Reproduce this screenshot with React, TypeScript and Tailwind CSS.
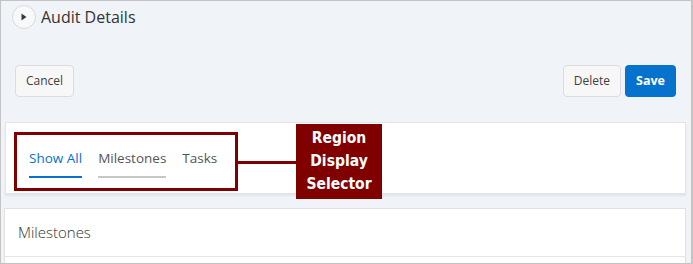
const font = { fontFamily: '"Open Sans", "Noto Sans", sans-serif' };

const PlayButton = () => (
  <button className="w-6 h-6 rounded-full border border-[#d9d9d9] bg-[#f8f9fa] flex items-center justify-center">
    <svg width="6" height="8" viewBox="0 0 6 8">
      <path d="M0.5 0.5 L5.5 4 L0.5 7.5 Z" fill="#3a3a3a" />
    </svg>
  </button>
);

const Tab = ({ label, active, seen }: { label: string; active?: boolean; seen?: boolean }) => (
  <div
    className={
      active
        ? "text-[13.5px] leading-4 pb-[10px] border-b-2 border-[#0572ce] text-[#0572ce]"
        : seen
        ? "text-[13.5px] leading-4 pb-[10px] border-b-2 border-[#c8c8c8] text-[#555]"
        : "text-[13.5px] leading-4 pb-[10px] border-b-2 border-transparent text-[#555]"
    }
  >
    {label}
  </div>
);

export default function App() {
  return (
    <div
      className="relative w-[693px] h-[264px] overflow-hidden bg-[#f0f4f9] border-t border-l border-b border-r-2 border-[#c4c4c4]"
      style={font}
    >
      {/* Title row */}
      <div className="flex items-center gap-[5px] pt-[4px] pl-[11px]">
        <PlayButton />
        <span className="text-[16px] leading-6 text-[#333]">Audit Details</span>
      </div>

      {/* Buttons */}
      <div className="flex items-center justify-between mt-[36px] pl-[14px] pr-[15px]">
        <button className="h-8 px-[10px] rounded-sm border border-[#dcdcdc] bg-[#f7f7f7] text-[12px] text-[#404040]">
          Cancel
        </button>
        <div className="flex gap-1">
          <button className="h-8 px-[10px] rounded-sm border border-[#dcdcdc] bg-[#f7f7f7] text-[12px] text-[#404040]">
            Delete
          </button>
          <button className="h-8 px-[11px] rounded-sm bg-[#0572ce] text-[12.5px] font-bold text-white">
            Save
          </button>
        </div>
      </div>

      {/* Region display selector */}
      <div className="mt-[25px] ml-[4px] mr-[5px] h-[72px] bg-white border border-[#e3e3e3] shadow-[0_2px_2px_rgba(0,0,0,0.06)] pl-[23px] pt-[27px]">
        <div className="flex gap-4">
          <Tab label="Show All" active />
          <Tab label="Milestones" seen />
          <Tab label="Tasks" />
        </div>
      </div>

      {/* Milestones region */}
      <div className="mt-[14px] ml-[3px] mr-[5px] bg-white border border-[#e0e0e0]">
        <div className="h-[48px] flex items-center pl-[13px] border-b border-[#e6e6e6] text-[15px] font-light text-[#333]">
          Milestones
        </div>
        <div className="h-10" />
      </div>

      {/* Annotation overlay */}
      <div className="absolute left-[13px] top-[131px] w-[224px] h-[59px] border-[3px] border-[#800000]" />
      <div className="absolute left-[236px] top-[160px] w-[60px] h-[3px] bg-[#800000]" />
      <div
        className="absolute left-[295px] top-[123px] w-[86px] h-[75px] bg-[#800000] flex flex-col items-center justify-center text-white font-bold text-[15.5px] leading-[23px] text-center"
        style={{ fontFamily: '"Liberation Sans Narrow", "DejaVu Sans Condensed", sans-serif' }}
      >
        <span>Region</span>
        <span>Display</span>
        <span>Selector</span>
      </div>
    </div>
  );
}
